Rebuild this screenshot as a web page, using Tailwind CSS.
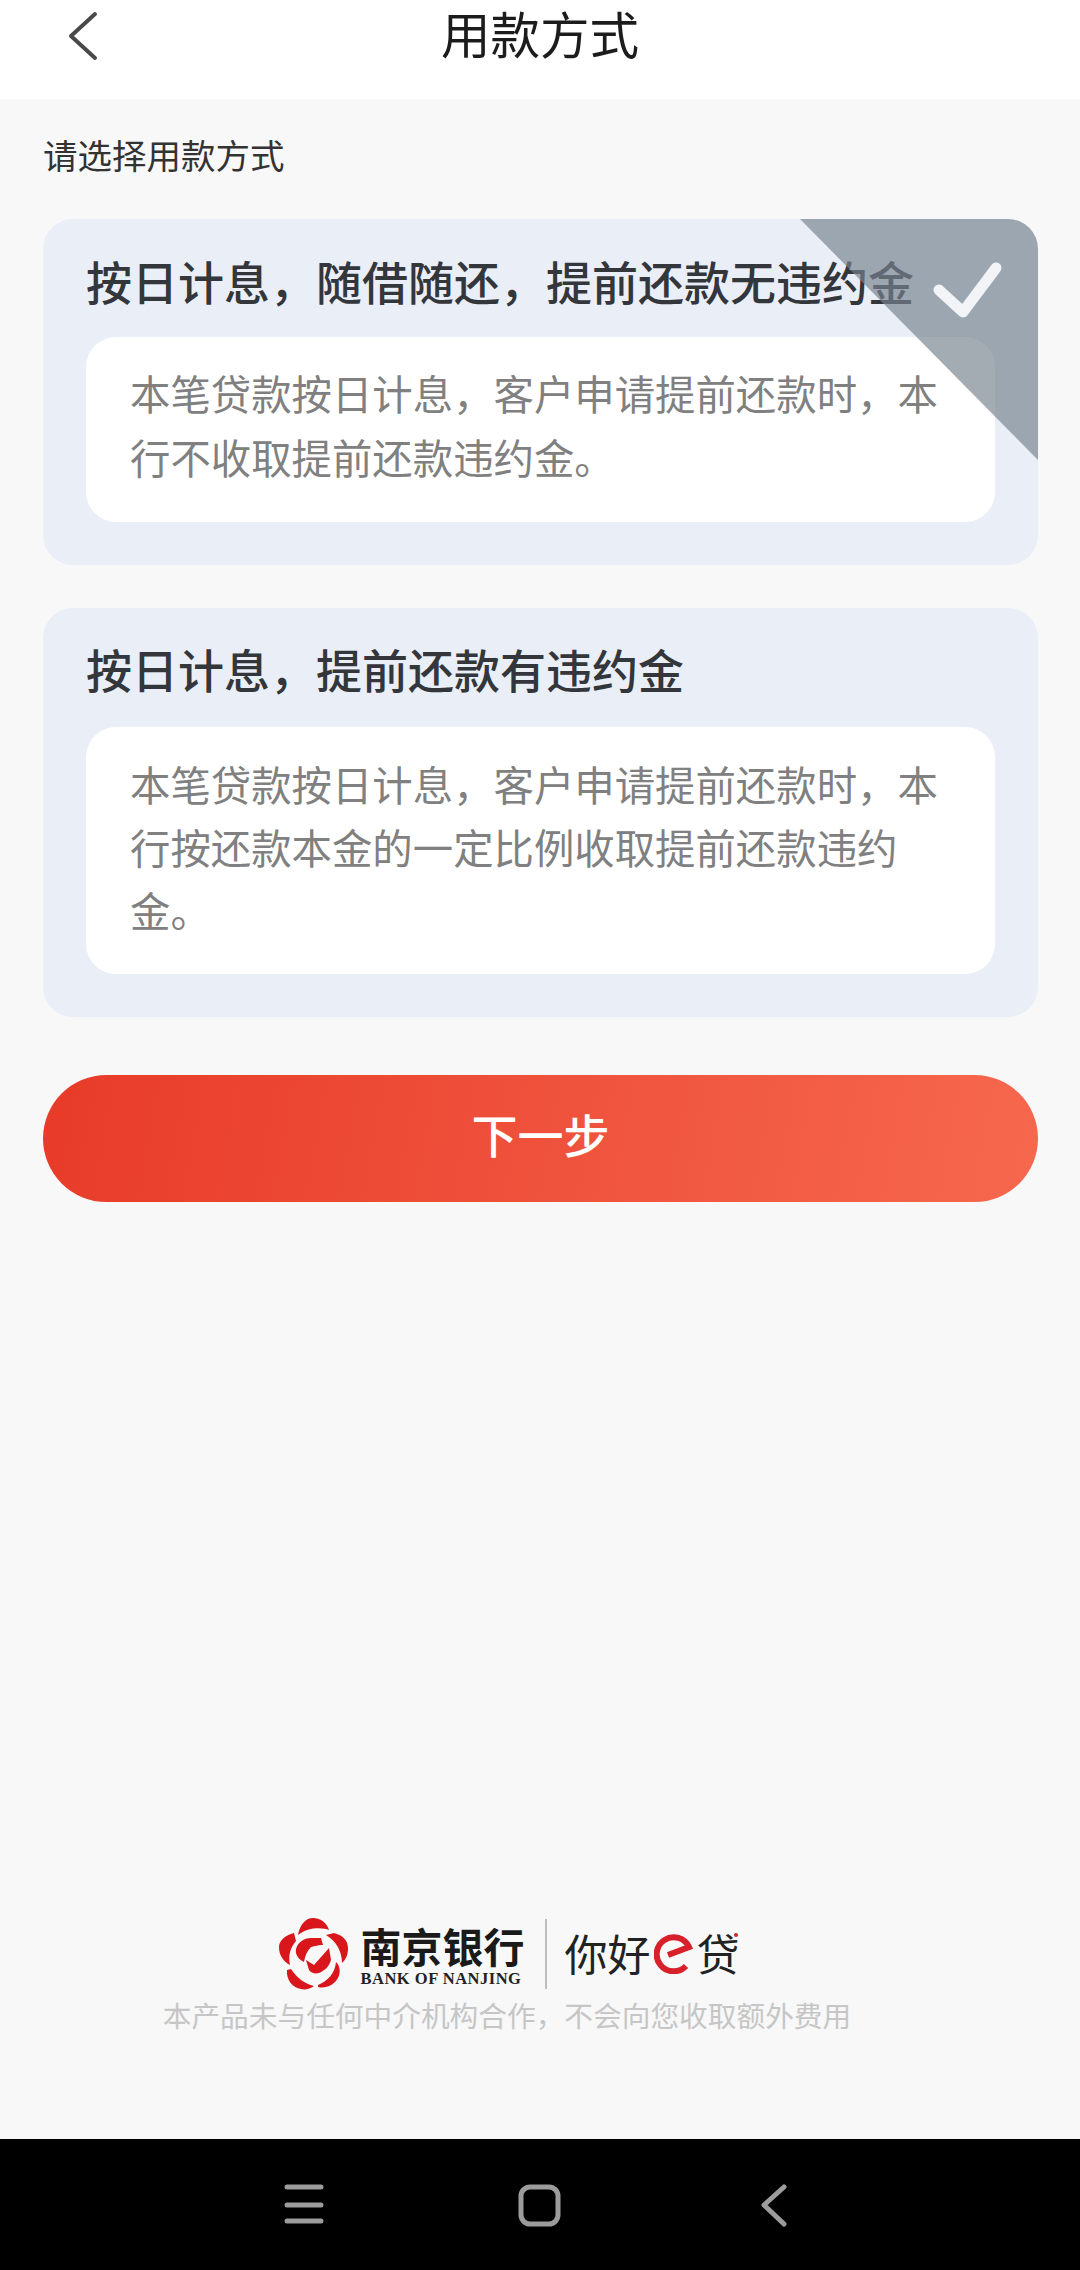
<!DOCTYPE html>
<html lang="zh-CN">
<head>
    <meta charset="UTF-8">
    <meta name="viewport" content="width=device-width, initial-scale=1.0">
    <title>用款方式</title>
    <script src="https://cdn.jsdelivr.net/npm/@tailwindcss/browser@4"></script>
</head>
<body class="bg-[#f8f8f8] font-['Noto_Sans_CJK_SC','Noto_Sans',sans-serif]">
<div class="flex flex-col w-[1080px] h-[2270px] overflow-hidden">
    <!-- header -->
    <header class="relative h-[99px] shrink-0 bg-white flex justify-center">
        <svg class="absolute left-[66px] top-[11px]" width="34" height="50" viewBox="0 0 34 50" fill="none">
            <path d="M29 3 L5 25 L29 47" stroke="#4a4a4a" stroke-width="4" stroke-linecap="round" stroke-linejoin="round"/>
        </svg>
        <h1 class="text-[49.5px] leading-[66px] text-[#1c1c1c]">用款方式</h1>
    </header>

    <main class="pl-[43px] pr-[42px] flex flex-col">
        <p class="mt-[31px] text-[34.5px] leading-[48px] text-[#333]">请选择用款方式</p>

        <!-- option 1, selected -->
        <section class="relative mt-[41px] h-[346px] rounded-[30px] bg-[#e9eef7] overflow-hidden px-[43px] pt-[32px]">
            <h2 class="text-[46px] leading-[58px] font-medium text-[#33363b] whitespace-nowrap">按日计息，随借随还，提前还款无违约金</h2>
            <div class="mt-[28px] h-[185px] rounded-[30px] bg-white pl-[44px] pr-[50px] pt-[24px] text-[40.4px] leading-[64px] text-[#808080]">
                本笔贷款按日计息，客户申请提前还款时，本行不收取提前还款违约金。
            </div>
            <svg class="absolute right-0 top-0" width="238" height="241" viewBox="0 0 238 241">
                <polygon points="0,0 238,0 238,241" fill="#77838f" fill-opacity="0.68"/>
                <path d="M139 71 L163 93 L196 49" fill="none" stroke="#f3f4f8" stroke-width="11" stroke-linecap="round" stroke-linejoin="round"/>
            </svg>
        </section>

        <!-- option 2 -->
        <section class="mt-[43px] h-[409px] rounded-[30px] bg-[#e9eef7] px-[43px] pt-[31px]">
            <h2 class="text-[46px] leading-[58px] font-medium text-[#33363b] whitespace-nowrap">按日计息，提前还款有违约金</h2>
            <div class="mt-[30px] h-[247px] rounded-[30px] bg-white pl-[44px] pr-[50px] pt-[25px] text-[40.4px] leading-[63px] text-[#808080]">
                本笔贷款按日计息，客户申请提前还款时，本行按还款本金的一定比例收取提前还款违约金。
            </div>
        </section>

        <button class="mt-[58px] h-[127px] pb-[10px] rounded-full bg-linear-[100deg] from-[#e83b29] to-[#f6684e] text-[46px] font-medium text-white">下一步</button>
    </main>

    <!-- footer logo -->
    <footer class="mt-auto pr-[66px] flex flex-col items-center">
        <div class="flex items-center h-[72px] ml-[4px]">
            <svg width="70" height="72" viewBox="0 0 70 72" fill="#d9161c">
                <path d="M19 17 C21 6 27 0 34 0 C42 0 48 5 50 12 C44 9 28 9 19 17 Z"/>
                <path d="M47 17 L55 15 C63 17 69 22 69 30 C69 37 67 41 63 45 C63 33 57 23 47 17 Z"/>
                <path d="M15 15 L17 23 C11 30 9 38 11 47 C4 43 0 37 0 29 C0 23 6 17 15 15 Z"/>
                <path d="M8 52 L12 51 C18 60 26 66 35 68 C31 71 26 72 22 71 C14 70 7 62 8 52 Z"/>
                <path d="M57 44 C61 48 62 54 59 60 C55 67 47 71 39 69 L39 67 C49 63 56 55 57 44 Z"/>
                <path d="M25 44 C19 41 16 36 17 31 C19 24 25 20 32 20 L42 20 L44 27 C38 27 33 29 32 29 C28 33 26 38 25 44 Z"/>
                <path d="M27 42 L35 47 L50 30 L52 42 C50 49 45 53 40 55 C36 56 32 55 30 52 Z"/>
            </svg>
            <div class="ml-[12px] w-[164px]">
                <div class="text-[41px] leading-[47px] font-bold text-[#1a1a1a] whitespace-nowrap">南京银行</div>
                <div class="mt-[1px] font-['Liberation_Serif',serif] font-bold text-[16.5px] leading-[17px] text-[#222] whitespace-nowrap tracking-[0.5px]">BANK OF NANJING</div>
            </div>
            <div class="ml-[20px] w-[2px] h-[70px] bg-[#bdbdbd]"></div>
            <div class="ml-[18px] pb-[4px] flex items-center text-[43px] leading-[50px] text-[#222]">
                <span>你好</span>
                <svg class="mx-[3px] mt-[4px]" width="40" height="40" viewBox="0 0 40 40" fill="none" stroke="#d8202a">
                    <path d="M32 32 A17 17 0 1 1 35 13 L14 21" stroke-width="6"/>
                </svg>
                <span class="relative">贷<span class="absolute right-[2px] top-[6px] w-[4px] h-[4px] rounded-full bg-[#d8202a]"></span></span>
            </div>
        </div>
        <p class="mt-[5px] mb-[104px] text-[28.7px] leading-[40px] text-[#c6c6c6] whitespace-nowrap">本产品未与任何中介机构合作，不会向您收取额外费用</p>
    </footer>

    <!-- android nav bar -->
    <nav class="h-[131px] shrink-0 bg-black relative">
        <svg class="absolute left-0 top-0" width="1080" height="131" viewBox="0 0 1080 131" fill="none" stroke="#9c9c9c">
            <path d="M287 48 H321 M287 66 H321 M287 82 H321" stroke-width="5" stroke-linecap="round"/>
            <rect x="521" y="48" width="37" height="37" rx="9" stroke-width="5"/>
            <path d="M784 48 L764 66 L784 85" stroke-width="5" stroke-linecap="round" stroke-linejoin="round"/>
        </svg>
    </nav>
</div>
</body>
</html>
